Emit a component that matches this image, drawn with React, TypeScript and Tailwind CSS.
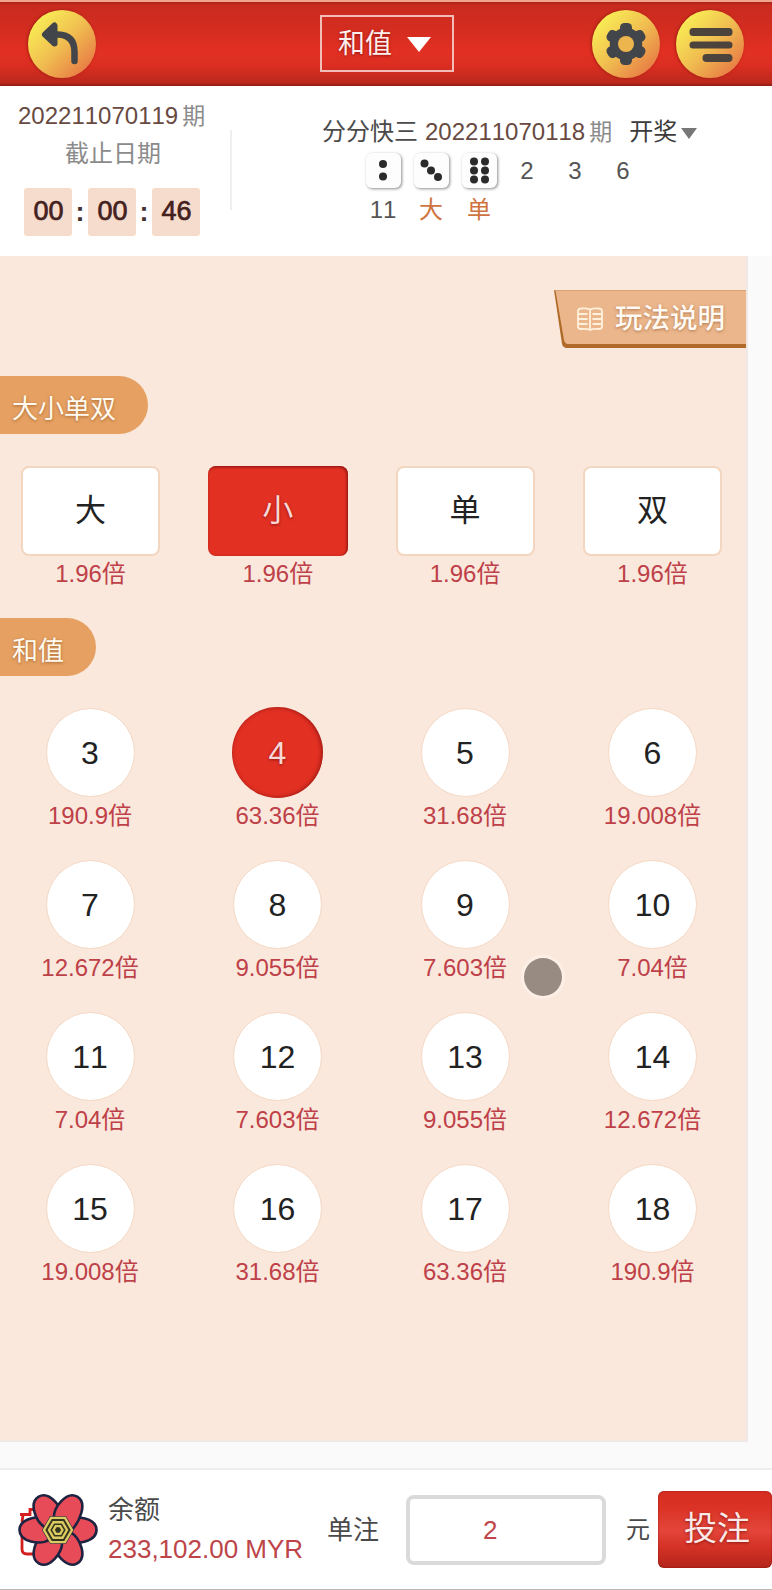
import React from "react";

const NUM = "font-['Liberation_Sans','Noto_Sans_CJK_SC',sans-serif] [font-kerning:none]";

const sizes = [
  { label: "大", odds: "1.96倍" },
  { label: "小", odds: "1.96倍", active: true },
  { label: "单", odds: "1.96倍" },
  { label: "双", odds: "1.96倍" },
];

const sums = [
  ["3", "190.9倍"], ["4", "63.36倍"], ["5", "31.68倍"], ["6", "19.008倍"],
  ["7", "12.672倍"], ["8", "9.055倍"], ["9", "7.603倍"], ["10", "7.04倍"],
  ["11", "7.04倍"], ["12", "7.603倍"], ["13", "9.055倍"], ["14", "12.672倍"],
  ["15", "19.008倍"], ["16", "31.68倍"], ["17", "63.36倍"], ["18", "190.9倍"],
];

function RoundButton({ children }: { children: React.ReactNode }) {
  return (
    <button className="flex h-[68px] w-[68px] shrink-0 items-center justify-center rounded-full bg-[linear-gradient(135deg,#f9ee55_12%,#f0be50_50%,#e87845_90%)] shadow-[-1px_0px_3px_rgba(110,20,0,0.55)]">
      {children}
    </button>
  );
}

function BackIcon() {
  return (
    <svg viewBox="0 0 68 68" className="h-[68px] w-[68px]">
      <path d="M46.500 51V42Q46.500 25 30 24.500H22" fill="none" stroke="#424549" strokeWidth="6.500" strokeLinecap="round" />
      <path d="M17 24.500L26.500 15.500V33.500Z" fill="#424549" stroke="#424549" strokeWidth="6" strokeLinejoin="round" />
    </svg>
  );
}

function GearIcon() {
  return (
    <svg viewBox="-34 -34 68 68" className="h-[68px] w-[68px]">
      <g fill="#424549">
        {[0, 60, 120].map((a) => (
          <rect key={a} x="-6" y="-21" width="12" height="42" rx="4.500" transform={`rotate(${a})`} />
        ))}
      </g>
      <circle r="12" fill="none" stroke="#424549" strokeWidth="8.500" />
      <circle r="8" fill="#edb54e" />
    </svg>
  );
}

function MenuIcon() {
  return (
    <svg viewBox="0 0 68 68" className="h-[68px] w-[68px]">
      <g fill="#4b433c">
        <rect x="13.500" y="18" width="43" height="8" rx="3.500" />
        <rect x="13.500" y="31.500" width="43" height="7" rx="3.500" />
        <rect x="26.500" y="44" width="30" height="8" rx="4" />
      </g>
    </svg>
  );
}

const pips: Record<number, number[][]> = {
  2: [[17, 11], [17, 23.5]],
  3: [[10.5, 10.5], [17, 17.5], [24, 24]],
  6: [[12, 8.5], [23, 8.5], [12, 17.5], [23, 17.5], [12, 26.5], [23, 26.5]],
};

function Die({ value }: { value: number }) {
  return (
    <div className="flex w-12 justify-center">
      <div className="h-[35px] w-[35px] rounded-md bg-[#fdfdfd] shadow-[1px_1px_3px_rgba(0,0,0,0.45)]">
        <svg viewBox="0 0 35 35" className="h-[35px] w-[35px]">
          {pips[value].map(([x, y], i) => (
            <circle key={i} cx={x} cy={y} r="4" fill="#2b2b2b" />
          ))}
        </svg>
      </div>
    </div>
  );
}

function SectionTag({ children }: { children: React.ReactNode }) {
  return (
    <div className="flex h-[58px] w-fit items-center rounded-r-full bg-[#e5a062] pl-3 pr-8 pt-[7px] text-[26px] leading-none text-[#fffaf0] [text-shadow:0_1px_3px_rgba(120,60,10,0.55)]">
      {children}
    </div>
  );
}

function TimeBox({ children }: { children: string }) {
  return (
    <div className="flex h-12 w-12 items-center justify-center rounded-[3px] bg-[#f6dccd] pb-[2px] pl-px text-[27px] font-medium text-[#43211d] [-webkit-text-stroke:0.7px_#43211d]">
      {children}
    </div>
  );
}

function FlowerLogo() {
  return (
    <svg viewBox="-41 -38 82 76" className="h-[76px] w-[82px] shrink-0">
      <path d="M-38 -15.500H-28V-20.500H-20M-35 -15L-36 -8M-36 4V19Q-36 24-31 24H-22" fill="none" stroke="#d3201f" strokeWidth="2.800" />
      {[0, 60, 120, 180, 240, 300].map((a) => (
        <path key={a} d="M8 -9.500C18 -15.500 38.500 -12 38.500 0C38.500 12 18 15.500 3 11Z" transform={`rotate(${a})`} fill="#e84b58" stroke="#1d2340" strokeWidth="2.600" strokeLinejoin="round" />
      ))}
      <polygon points="16,0 8,13.860 -8,13.860 -16,0 -8,-13.860 8,-13.860" fill="#1d2340" />
      {[14, 9, 4.500].map((r) => (
        <polygon key={r} points={`${r},0 ${r / 2},${r * 0.866} ${-r / 2},${r * 0.866} ${-r},0 ${-r / 2},${-r * 0.866} ${r / 2},${-r * 0.866}`} fill="#35351f" stroke="#dccb60" strokeWidth="2.400" />
      ))}
    </svg>
  );
}

export default function App() {
  return (
    <div className={`flex h-[1590px] w-[772px] flex-col overflow-hidden bg-white ${NUM}`}>
      <header className="flex h-[86px] shrink-0 items-center border-t-2 border-[#efa58e] bg-[linear-gradient(180deg,#a92318_0%,#c92b1f_4%,#d52d20_35%,#e23023_60%,#dc2e22_75%,#bd281c_96%,#8f1b12_100%)] pb-px pl-7 pr-7">
        <RoundButton><BackIcon /></RoundButton>
        <button className="ml-[224px] flex h-[57px] w-[134px] items-center border-2 border-[#f3bdb7] pl-4 text-[27px] leading-none text-[#fff0ee] [text-shadow:0_1px_3px_rgba(90,0,0,0.6)]">
          <span className="pt-[2px]">和值</span>
          <svg viewBox="0 0 24 15" className="ml-[15px] mt-[2px] h-[15px] w-6"><path d="M0 0H24L12 15Z" fill="#fff" /></svg>
        </button>
        <div className="ml-auto flex gap-4">
          <RoundButton><GearIcon /></RoundButton>
          <RoundButton><MenuIcon /></RoundButton>
        </div>
      </header>

      <section className="flex h-[170px] shrink-0 text-2xl leading-none">
        <div className="flex w-[230px] flex-col">
          <div className="mt-[18px] flex h-6 items-center pl-[18px]">
            <span className="text-[#684a42]">202211070119</span>
            <span className="ml-1 text-[23px] text-[#8b8b8b]">期</span>
          </div>
          <div className="mt-[14px] flex h-6 items-center pl-[65px] text-[#8b8b8b]">截止日期</div>
          <div className="mt-[22px] flex items-center pl-6">
            <TimeBox>00</TimeBox>
            <span className="w-4 text-center text-[27px] font-bold text-[#43302d]">:</span>
            <TimeBox>00</TimeBox>
            <span className="w-4 text-center text-[27px] font-bold text-[#43302d]">:</span>
            <TimeBox>46</TimeBox>
          </div>
        </div>
        <div className="mt-11 h-20 w-[2px] bg-[#efefef]" />
        <div className="flex flex-col">
          <div className="mt-[34px] flex h-6 items-center pl-[90px]">
            <span className="text-[#4a4a4a]">分分快三</span>
            <span className="ml-[7px] text-[#684a42]">202211070118</span>
            <span className="ml-1 text-[23px] text-[#8b8b8b]">期</span>
            <span className="ml-[17px] text-[#3c3c3c]">开奖</span>
            <svg viewBox="0 0 16 11" className="ml-1 mt-[2px] h-[11px] w-4"><path d="M0 0H16L8 11Z" fill="#777" /></svg>
          </div>
          <div className="mt-[9px] flex h-9 pl-[127px] text-[#555]">
            <Die value={2} />
            <Die value={3} />
            <Die value={6} />
            {["2", "3", "6"].map((n) => (
              <span key={n} className="w-12 pt-[6px] text-center">{n}</span>
            ))}
          </div>
          <div className="mt-[9px] flex pl-[127px] text-center">
            <span className="w-12 text-[#555]">11</span>
            <span className="w-12 text-[#cf7440]">大</span>
            <span className="w-12 text-[#cf7440]">单</span>
          </div>
        </div>
      </section>

      <div className="h-[1212px] shrink-0 bg-[#fafafa]">
        <main className="relative flex h-[1186px] w-[748px] flex-col border-b-2 border-r-2 border-[#efe8e4] bg-[#fae8dc]">
          <button className="relative ml-auto mt-[34px] flex h-[58px] w-[192px] items-center">
            <svg viewBox="0 0 192 58" className="absolute inset-0 h-[58px] w-[192px]">
              <path d="M0 0H192V58H13Q9 58 8 54Z" fill="#b06a2a" />
              <path d="M1.500 0.500H192V54H14Q11 54 10 50Z" fill="#ebb68b" />
              <path d="M0.500 0.500H192" stroke="#dda272" />
            </svg>
            <svg viewBox="0 0 26 24" className="relative ml-[23px] h-6 w-[26px]" fill="none" stroke="#fff0dc" strokeWidth="1.800">
              <path d="M13 2.500Q10 1 4 1.500Q1 1.500 1 4V19.500Q1 22 4 22Q10 21.500 13 23Q16 21.500 22 22Q25 22 25 19.500V4Q25 1.500 22 1.500Q16 1 13 2.500V23M1 7H10.500M1 12H10.500M1 17H10.500M15.500 7H25M15.500 12H25M15.500 17H25" />
            </svg>
            <span className="relative ml-3 whitespace-nowrap text-[27.500px] font-medium leading-none text-[#fffaf3] [text-shadow:0_1px_3px_rgba(120,60,20,0.5)]">玩法说明</span>
          </button>

          <div className="mt-[28px]"><SectionTag>大小单双</SectionTag></div>
          <div className="mt-8 flex gap-[47.300px] pl-[20.500px]">
            {sizes.map((s) => (
              <div key={s.label} className="flex w-[140px] flex-col items-center">
                <button className={`flex h-[90px] items-center justify-center rounded-lg text-[31px] ${s.active ? "w-[140px] bg-[#e23023] text-[#f8d8d6] shadow-[inset_-1px_1px_3px_rgba(90,0,0,0.7)] [text-shadow:0_1px_3px_rgba(90,0,0,0.6)]" : "w-[139px] border-2 border-[#f3d6c0] bg-white text-[#222]"}`}>
                  {s.label}
                </button>
                <span className="mt-[6px] text-2xl leading-none text-[#be4048]">{s.odds}</span>
              </div>
            ))}
          </div>

          <div className="mt-8"><SectionTag>和值</SectionTag></div>
          <div className="mt-[31px] grid grid-cols-[repeat(4,140px)] gap-x-[47.500px] gap-y-[32px] pl-5">
            {sums.map(([n, odds]) => (
              <div key={n} className="flex h-[120px] flex-col items-center">
                <div className="flex h-[91px] shrink-0 items-center">
                  <button className={`flex items-center justify-center rounded-full text-[32px] leading-none ${n === "4" ? "h-[91px] w-[91px] bg-[#e23023] text-[#f8d8d6] shadow-[inset_-1px_0px_4px_rgba(90,0,0,0.6)] [text-shadow:0_1px_3px_rgba(90,0,0,0.6)]" : "h-[89px] w-[89px] border-[1.500px] border-[#f5d8c4] bg-white text-[#222]"}`}>
                    {n}
                  </button>
                </div>
                <span className="mt-[6px] text-2xl leading-none text-[#be4048]">{odds}</span>
              </div>
            ))}
          </div>
          <div className="absolute left-[524px] top-[702px] h-[38px] w-[38px] rounded-full bg-[#978b82] shadow-[0_0_2px_3px_rgba(255,245,238,0.6)]" />
        </main>
      </div>

      <footer className="flex h-[122px] shrink-0 items-center border-b border-t-2 border-b-[#bbb] border-t-[#eee] bg-white text-[26px] leading-none text-[#4a4a4a]">
        <div className="ml-[17px]"><FlowerLogo /></div>
        <div className="ml-[9px] flex w-[219px] flex-col">
          <span>余额</span>
          <span className="mt-[13px] whitespace-nowrap text-[26px] text-[#bd4549]">233,102.00 MYR</span>
        </div>
        <span className="shrink-0">单注</span>
        <div className="ml-[27px] flex h-[70px] w-[200px] shrink-0 items-center rounded-lg border-4 border-[#dadada] pl-[73px] text-[#c0474a]">2</div>
        <span className="ml-5 shrink-0 text-2xl">元</span>
        <button className="ml-2 flex h-[77px] w-[114px] shrink-0 items-center justify-center rounded-md bg-[linear-gradient(180deg,#d52e21_0%,#da3224_20%,#e3453a_52%,#d63226_72%,#b3251a_100%)] pb-[2px] pl-1 text-[33px] text-[#fbe9e7] shadow-[inset_0_0_2px_rgba(110,0,0,0.7)] [text-shadow:0_1px_3px_rgba(90,0,0,0.6)]">投注</button>
      </footer>
    </div>
  );
}
